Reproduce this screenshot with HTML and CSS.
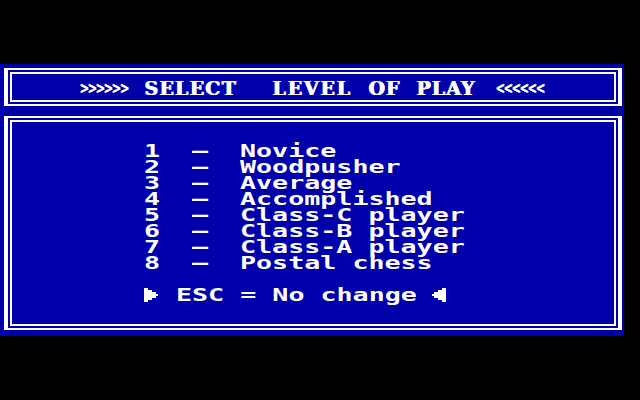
FILE: index.html
```html
<!DOCTYPE html>
<html lang="en">
<head>
    <meta charset="UTF-8">
    <title>Select Level of Play</title>
    <link rel="stylesheet" href="styles.css">
</head>
<body>
    <div class="panel">
        <!-- Title bar -->
        <div class="frame">
            <div class="frame-inner title-bar">
                <span class="chev">&gt;&gt;&gt;&gt;&gt;&gt;</span>
                <span class="title">
                    <span class="word w-select">SELECT</span>
                    <span class="word w-level">LEVEL</span>
                    <span class="word w-of">OF</span>
                    <span class="word w-play">PLAY</span>
                </span>
                <span class="chev">&lt;&lt;&lt;&lt;&lt;&lt;</span>
            </div>
        </div>

        <!-- Level list -->
        <div class="frame">
            <div class="frame-inner menu">
                <div class="row"><span class="cell num">1</span><span class="cell dash">—</span><span class="cell">Novice</span></div>
                <div class="row"><span class="cell num">2</span><span class="cell dash">—</span><span class="cell">Woodpusher</span></div>
                <div class="row"><span class="cell num">3</span><span class="cell dash">—</span><span class="cell">Average</span></div>
                <div class="row"><span class="cell num">4</span><span class="cell dash">—</span><span class="cell">Accomplished</span></div>
                <div class="row"><span class="cell num">5</span><span class="cell dash">—</span><span class="cell">Class-C player</span></div>
                <div class="row"><span class="cell num">6</span><span class="cell dash">—</span><span class="cell">Class-B player</span></div>
                <div class="row"><span class="cell num">7</span><span class="cell dash">—</span><span class="cell">Class-A player</span></div>
                <div class="row"><span class="cell num">8</span><span class="cell dash">—</span><span class="cell">Postal chess</span></div>

                <div class="row esc">
                    <svg class="pointer" width="14" height="14" viewBox="0 0 14 14">
                        <polygon points="0,0 4,0 4,2 8,2 8,4 12,4 12,6 14,6 14,8 12,8 12,10 8,10 8,12 4,12 4,14 0,14" fill="#fff"/>
                    </svg>
                    <span class="cell esc-text">ESC = No change</span>
                    <svg class="pointer" width="14" height="14" viewBox="0 0 14 14">
                        <polygon points="14,0 10,0 10,2 6,2 6,4 2,4 2,6 0,6 0,8 2,8 2,10 6,10 6,12 10,12 10,14 14,14" fill="#fff"/>
                    </svg>
                </div>
            </div>
        </div>
    </div>
</body>
</html>
```

FILE: styles.css
```css
body {
    margin: 0;
    padding: 0;
    background-color: #000;
    width: 640px;
    height: 400px;
    overflow: hidden;
}

/* blue window, 39 x 17 character cells */
.panel {
    margin-top: 64px;
    width: 624px;
    height: 272px;
    box-sizing: border-box;
    padding: 4px 2px 6px 4px;
    background-color: #0000aa;
    display: flex;
    flex-direction: column;
    gap: 10px;
}

/* double line frame: thick outer, thin inner */
.frame {
    border: 2px solid #fff;
    border-left-width: 4px;
    border-right-width: 4px;
    padding: 2px;
}

.frame-inner {
    border: 2px solid #fff;
}

.frame:last-child {
    flex: 1;
    display: flex;
}

.frame:last-child .frame-inner {
    flex: 1;
}

/* title bar */
.title-bar {
    display: flex;
    align-items: flex-start;
    height: 26px;
    box-sizing: content-box;
    padding: 0 0 0 68px;
    color: #fff;
}

.chev {
    width: 48px;
    height: 16px;
    margin-top: 6px;
    line-height: 16px;
    font-family: "DejaVu Sans Mono", monospace;
    font-weight: bold;
    font-size: 18px;
    white-space: pre;
    display: inline-block;
    transform: scaleX(0.7407);
    transform-origin: 0 50%;
    text-shadow: 1px 0 0 #fff;
}

.title {
    display: flex;
    width: 336px;
    margin: 6px 16px 0 16px;
    height: 16px;
}

/* heavy slab letters, widened a little like the doubled pixels */
.word {
    display: block;
    font-family: "DejaVu Serif", serif;
    font-weight: bold;
    font-size: 19px;
    line-height: 16px;
    white-space: pre;
    text-shadow: 1px 0 0 #fff;
}

.w-select {
    width: 128px;
    letter-spacing: 1.2px;
}

.w-level {
    width: 96px;
    letter-spacing: 1.8px;
}

.w-of {
    width: 48px;
    letter-spacing: 1px;
}

.w-play {
    width: 64px;
    letter-spacing: 1px;
}

/* level list */
.menu {
    padding: 22px 0 0 132px;
    color: #fff;
    font-family: "DejaVu Sans Mono", monospace;
    font-weight: bold;
    font-size: 18px;
    line-height: 16px;
}

.row {
    display: flex;
    height: 16px;
    position: relative;
    top: -1px;
}

.row.esc {
    margin-top: 16px;
    top: 0;
    align-items: flex-start;
}

.cell {
    display: inline-block;
    white-space: pre;
    transform: scaleX(1.4815);
    transform-origin: 0 0;
}

.num,
.dash {
    width: 48px;
}

.pointer {
    display: block;
}

.row.esc .pointer:first-child {
    margin-right: 18px;
}

.esc-text {
    width: 256px;
    position: relative;
    top: -1px;
}
```
